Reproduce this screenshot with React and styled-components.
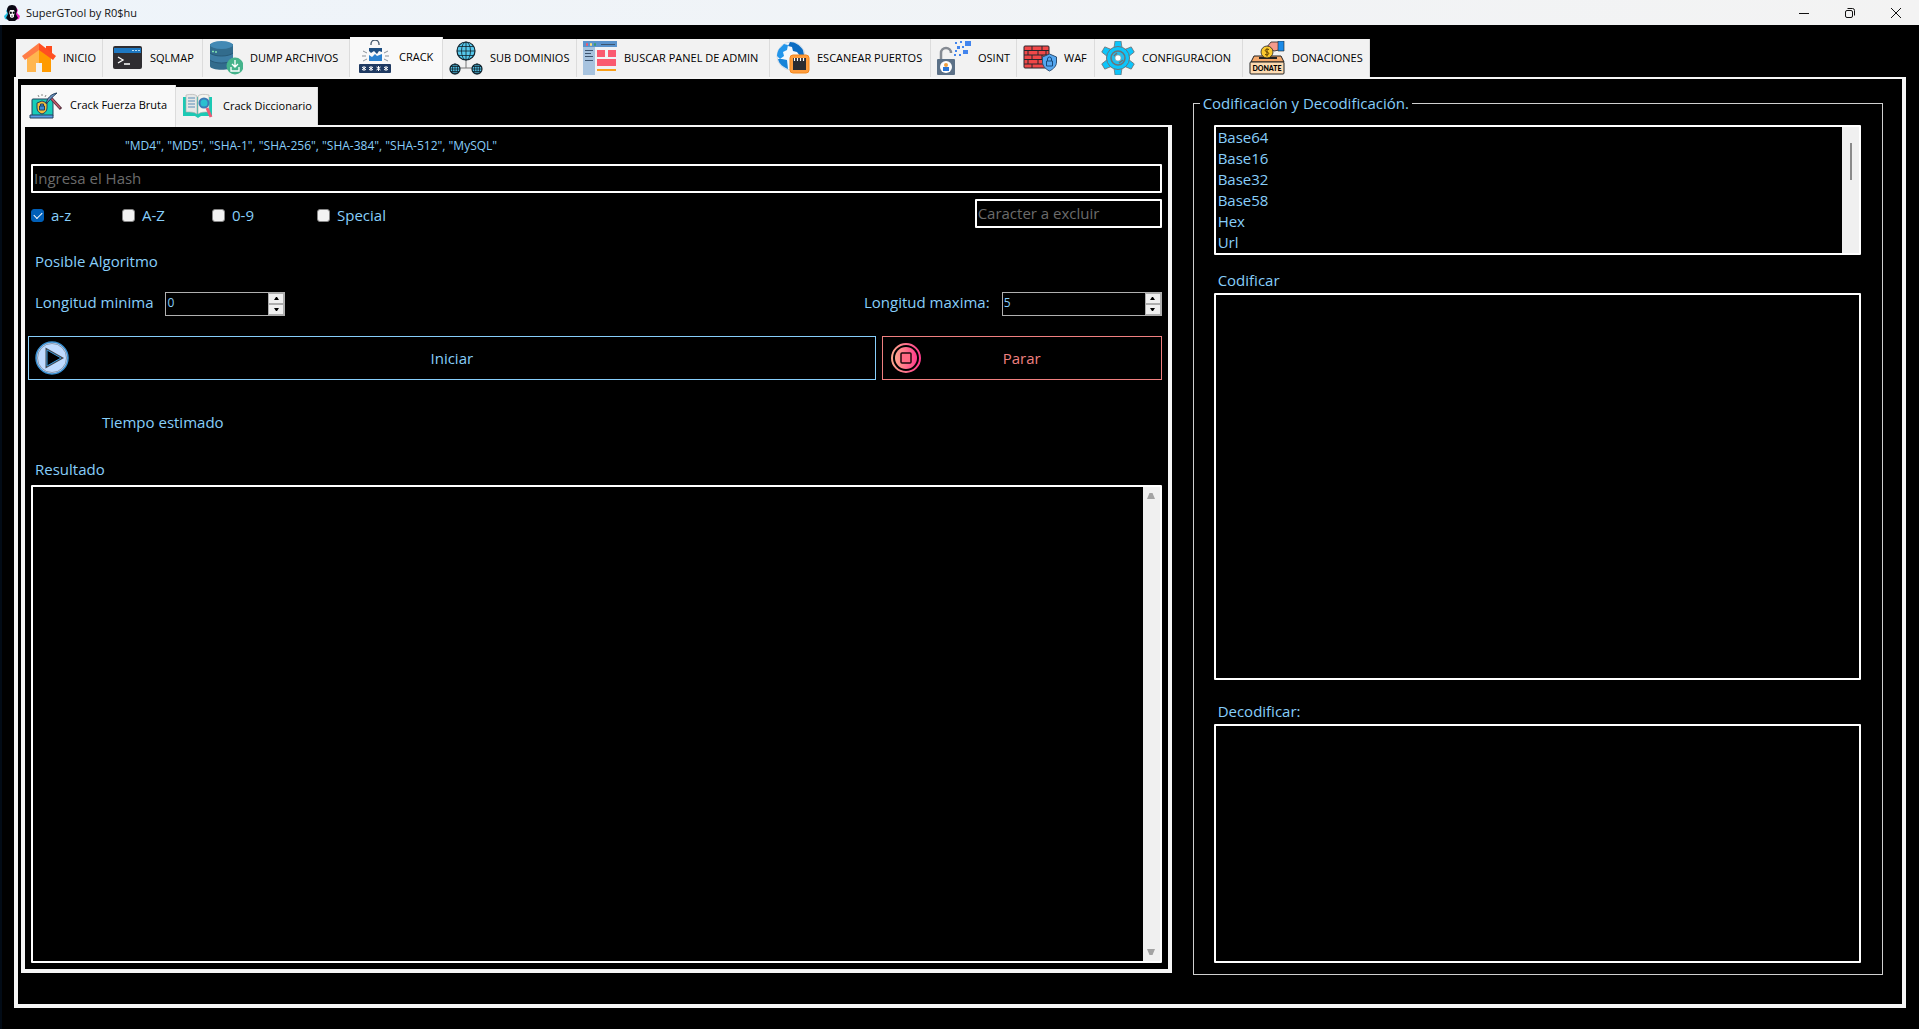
import React, { useState } from 'react'
import styled, { createGlobalStyle } from 'styled-components'

const TABS = [
  { name: 'INICIO', width: 87, icon: HomeIcon },
  { name: 'SQLMAP', width: 100, icon: TerminalIcon },
  { name: 'DUMP ARCHIVOS', width: 147, icon: DatabaseIcon },
  { name: 'CRACK', width: 93, icon: CrackIcon },
  { name: 'SUB DOMINIOS', width: 134, icon: DomainsIcon },
  { name: 'BUSCAR PANEL DE ADMIN', width: 193, icon: PanelIcon },
  { name: 'ESCANEAR PUERTOS', width: 161, icon: PortsIcon },
  { name: 'OSINT', width: 86, icon: OsintIcon },
  { name: 'WAF', width: 78, icon: WafIcon },
  { name: 'CONFIGURACION', width: 148, icon: GearIcon },
  { name: 'DONACIONES', width: 127, icon: DonateIcon },
]

const CRACK_TABS = [
  { name: 'Crack Fuerza Bruta', width: 155, icon: BruteIcon },
  { name: 'Crack Diccionario', width: 142, icon: BookIcon },
]

const CODECS = ['Base64', 'Base16', 'Base32', 'Base58', 'Hex', 'Url']

export default function App() {
  const [tab, setTab] = useState('CRACK')
  const [crackTab, setCrackTab] = useState('Crack Fuerza Bruta')

  return (
    <Window>
      <GlobalStyle />
      <TitleBar />
      <Main>
        <TabStrip inset={2} tabs={TABS} selected={tab} onSelect={setTab} />
        <Pane>
          <Columns>
            <CrackColumn>
              <TabStrip
                tabs={CRACK_TABS}
                selected={crackTab}
                onSelect={setCrackTab}
              />
              <Pane>
                <CrackForm />
              </Pane>
            </CrackColumn>
            <Codec />
          </Columns>
        </Pane>
      </Main>
    </Window>
  )
}

function TitleBar() {
  return (
    <TitleBarStyled>
      <SkullIcon />
      <Title>SuperGTool by R0$hu</Title>
      <WindowButton aria-label="Minimizar">
        <svg width="12" height="12" viewBox="0 0 12 12">
          <path d="M1 6.5h10" stroke="#111" />
        </svg>
      </WindowButton>
      <WindowButton aria-label="Restaurar">
        <svg width="12" height="12" viewBox="0 0 12 12" fill="none">
          <rect x="1.5" y="3.5" width="7" height="7" rx="1.5" stroke="#111" />
          <path d="M3.5 1.5h5a2 2 0 0 1 2 2v5" stroke="#111" />
        </svg>
      </WindowButton>
      <WindowButton aria-label="Cerrar">
        <svg width="12" height="12" viewBox="0 0 12 12">
          <path d="M1 1l10 10M11 1L1 11" stroke="#111" />
        </svg>
      </WindowButton>
    </TitleBarStyled>
  )
}

function TabStrip({ tabs, selected, onSelect, inset }) {
  return (
    <TabList role="tablist" $inset={inset}>
      {tabs.map(({ name, width, icon: Icon }) => (
        <Tab
          key={name}
          role="tab"
          aria-selected={name === selected}
          $active={name === selected}
          $width={width}
          onClick={() => onSelect(name)}
        >
          <Icon />
          {name}
        </Tab>
      ))}
    </TabList>
  )
}

function CrackForm() {
  return (
    <Form onSubmit={event => event.preventDefault()}>
      <Hashes>
        "MD4", "MD5", "SHA-1", "SHA-256", "SHA-384", "SHA-512", "MySQL"
      </Hashes>
      <TextInput aria-label="Hash" placeholder="Ingresa el Hash" />
      <CharsetRow>
        <Charsets>
          <Check label="a-z" defaultChecked />
          <Check label="A-Z" />
          <Check label="0-9" />
          <Check label="Special" />
        </Charsets>
        <ExcludeInput
          aria-label="Caracter a excluir"
          placeholder="Caracter a excluir"
        />
      </CharsetRow>
      <Algorithm>Posible Algoritmo</Algorithm>
      <LengthRow>
        <Spin id="min" label="Longitud minima" value={0} width={120} />
        <Spin id="max" label="Longitud maxima:" value={5} width={160} />
      </LengthRow>
      <Actions>
        <StartButton type="submit">
          <PlayIcon />
          <span>Iniciar</span>
        </StartButton>
        <StopButton type="button">
          <StopIcon />
          <span>Parar</span>
        </StopButton>
      </Actions>
      <Estimate>Tiempo estimado</Estimate>
      <ResultLabel htmlFor="result">Resultado</ResultLabel>
      <Frame $grow={1}>
        <TextArea id="result" readOnly />
        <ScrollBar>
          <Arrow viewBox="0 0 8 6">
            <path d="M2.5 0h3L8 6H0z" />
          </Arrow>
          <Arrow viewBox="0 0 8 6">
            <path d="M0 0h8L5.5 6h-3z" />
          </Arrow>
        </ScrollBar>
      </Frame>
    </Form>
  )
}

function Check({ label, ...props }) {
  return (
    <CheckLabel>
      <CheckBox type="checkbox" {...props} />
      {label}
    </CheckLabel>
  )
}

function Spin({ id, label, value, width }) {
  const [number, setNumber] = useState(value)
  return (
    <SpinGroup>
      <label htmlFor={id}>{label}</label>
      <SpinFrame $width={width}>
        <SpinInput
          id={id}
          type="number"
          value={number}
          onChange={event => setNumber(Number(event.target.value))}
        />
        <SpinButtons>
          <SpinButton
            type="button"
            aria-label="Subir"
            onClick={() => setNumber(number + 1)}
          >
            <svg width="5" height="3" viewBox="0 0 5 3">
              <path d="M2 0h1l2 3H0z" />
            </svg>
          </SpinButton>
          <SpinButton
            type="button"
            aria-label="Bajar"
            onClick={() => setNumber(Math.max(0, number - 1))}
          >
            <svg width="5" height="3" viewBox="0 0 5 3">
              <path d="M0 0h5L3 3H2z" />
            </svg>
          </SpinButton>
        </SpinButtons>
      </SpinFrame>
    </SpinGroup>
  )
}

function Codec() {
  return (
    <Group>
      <legend>Codificación y Decodificación.</legend>
      <Frame>
        <CodecList size={6} aria-label="Codificación">
          {CODECS.map(codec => (
            <option key={codec}>{codec}</option>
          ))}
        </CodecList>
        <ScrollBar $thumb>
          <Thumb />
        </ScrollBar>
      </Frame>
      <AreaLabel htmlFor="encode">Codificar</AreaLabel>
      <Frame $grow={13}>
        <TextArea id="encode" />
      </Frame>
      <AreaLabel htmlFor="decode">Decodificar:</AreaLabel>
      <Frame $grow={8}>
        <TextArea id="decode" />
      </Frame>
    </Group>
  )
}

const GlobalStyle = createGlobalStyle`
  * {
    box-sizing: border-box;
  }
  body {
    margin: 0;
    background: #000;
    color: #87cefa;
    font: 15px/20px 'Segoe UI', 'Open Sans', 'Noto Sans', sans-serif;
  }
  button, input, select, textarea {
    margin: 0;
    font: inherit;
    color: inherit;
  }
`

const Window = styled.div`
  display: flex;
  flex-direction: column;
  min-height: 100vh;
`
const TitleBarStyled = styled.header`
  display: flex;
  align-items: center;
  height: 25px;
  padding-left: 4px;
  background: linear-gradient(90deg, #eef4fa, #f3f3f3);
  color: #111;
`
const Title = styled.h1`
  flex: 1;
  margin: 0;
  padding-left: 6px;
  font-size: 11px;
  font-weight: 400;
`
const WindowButton = styled.button`
  display: grid;
  place-items: center;
  width: 46px;
  height: 22px;
  padding: 0;
  border: 0;
  background: none;
`

const Main = styled.main`
  flex: 1;
  display: flex;
  flex-direction: column;
  padding: 12px 13px 21px 12px;
  border-left: 2px solid #020b16;
`
const TabList = styled.div`
  display: flex;
  align-items: flex-end;
  padding-left: ${({ $inset }) => $inset || 0}px;
`
const Tab = styled.button`
  position: relative;
  display: flex;
  align-items: center;
  gap: 7px;
  width: ${({ $width }) => $width}px;
  height: ${({ $active }) => ($active ? 42 : 38)}px;
  margin-bottom: ${({ $active }) => ($active ? -2 : 0)}px;
  padding: ${({ $active }) => ($active ? '0 0 3px 8px' : '0 0 0 6px')};
  border: solid #dcdcdc;
  border-width: 0 1px 0 0;
  background: ${({ $active }) => ($active ? '#f9f9f9' : '#f2f2f2')};
  color: #000;
  font-size: 11px;
  white-space: nowrap;
  svg {
    flex: none;
  }
`
const Pane = styled.section`
  flex: 1;
  display: flex;
  flex-direction: column;
  border: solid #f6f6f6;
  border-width: 2px 4px 4px;
`
const Columns = styled.div`
  flex: 1;
  display: grid;
  grid-template-columns: minmax(0, 5fr) minmax(0, 3fr);
  gap: 21px;
  padding: 6px 19px 31px 3px;
`
const CrackColumn = styled.div`
  display: flex;
  flex-direction: column;
`

const Form = styled.form`
  flex: 1;
  display: flex;
  flex-direction: column;
  padding: 9px 6px 6px;
`
const Hashes = styled.p`
  margin: 0 0 8px;
  padding-left: 94px;
  font-size: 12px;
`
const TextInput = styled.input`
  height: 29px;
  padding: 0 1px 2px;
  border: 2px solid #fff;
  border-radius: 1px;
  background: #000;
  outline: none;
  &::placeholder {
    color: #6b6b6b;
    opacity: 1;
  }
`
const ExcludeInput = styled(TextInput)`
  width: 187px;
`
const CharsetRow = styled.div`
  display: flex;
  justify-content: space-between;
  align-items: flex-end;
  margin-top: 6px;
`
const Charsets = styled.div`
  display: grid;
  grid-template-columns: 91px 90px 105px auto;
  height: 26px;
`
const CheckLabel = styled.label`
  display: flex;
  align-items: center;
  gap: 7px;
`
const CheckBox = styled.input`
  appearance: none;
  display: grid;
  place-items: center;
  width: 13px;
  height: 13px;
  border: 1px solid #868686;
  border-radius: 3px;
  background: #f3f3f3;
  &:checked {
    border-color: #005fb8;
    background: #005fb8;
  }
  &:checked::after {
    content: '';
    width: 7px;
    height: 4px;
    margin-bottom: 2px;
    border: solid #fff;
    border-width: 0 0 1px 1px;
    transform: rotate(-45deg);
  }
`
const Algorithm = styled.p`
  margin: 23px 0 0;
  padding-left: 4px;
`
const LengthRow = styled.div`
  display: flex;
  justify-content: space-between;
  margin-top: 21px;
  padding-left: 4px;
`
const SpinGroup = styled.div`
  display: flex;
  align-items: flex-start;
  gap: 12px;
`
const SpinFrame = styled.div`
  display: flex;
  width: ${({ $width }) => $width}px;
  height: 24px;
  border: 1px solid #b0b0b0;
`
const SpinInput = styled.input`
  appearance: textfield;
  flex: 1;
  min-width: 0;
  padding: 0 0 3px 1px;
  border: 0;
  background: none;
  font-size: 12px;
  outline: none;
  &::-webkit-inner-spin-button {
    appearance: none;
  }
`
const SpinButtons = styled.div`
  display: flex;
  flex-direction: column;
  width: 16px;
  background: #f0f0f0;
`
const SpinButton = styled.button`
  flex: 1;
  display: grid;
  place-items: center;
  min-height: 0;
  padding: 0;
  border: 1px solid #adadad;
  background: #f0f0f0;
  line-height: 0;
`
const Actions = styled.div`
  display: grid;
  grid-template-columns: 1fr 280px;
  gap: 6px;
  margin: 20px 0 32px -3px;
`
const ActionButton = styled.button`
  display: flex;
  align-items: center;
  height: 44px;
  padding: 0 6px;
  border: 1px solid currentColor;
  background: #000;
  span {
    flex: 1;
    padding-right: 34px;
    text-align: center;
  }
`
const StartButton = styled(ActionButton)`
  color: #87cefa;
`
const StopButton = styled(ActionButton)`
  color: #f08080;
`
const Estimate = styled.p`
  margin: 0;
  padding-left: 71px;
`
const ResultLabel = styled.label`
  margin: 27px 0 6px;
  padding-left: 4px;
`

const Frame = styled.div`
  flex: ${({ $grow }) => ($grow ? `${$grow} 1 0` : 'none')};
  display: flex;
  min-height: ${({ $grow }) => ($grow ? 80 : 130)}px;
  border: 2px solid #fff;
  border-radius: 1px;
`
const TextArea = styled.textarea`
  flex: 1;
  min-width: 0;
  padding: 2px;
  border: 0;
  background: none;
  outline: none;
  resize: none;
`
const ScrollBar = styled.div`
  display: flex;
  flex-direction: column;
  align-items: center;
  justify-content: space-between;
  width: 17px;
  padding: ${({ $thumb }) => ($thumb ? '16px 0' : '6px 0')};
  background: #f0f0f0;
`
const Arrow = styled.svg`
  width: 8px;
  height: 6px;
  fill: #a3a3a3;
`
const Thumb = styled.div`
  width: 2px;
  height: 37px;
  background: #8a8a8a;
`

const Group = styled.fieldset`
  display: flex;
  flex-direction: column;
  min-width: 0;
  margin: 7px 0 -2px;
  padding: 11px 21px 11px 20px;
  border: 1px solid #d0d0d0;
  legend {
    margin-left: -14px;
    padding: 0 3px;
    line-height: 22px;
  }
`
const CodecList = styled.select`
  flex: 1;
  height: 126px;
  padding: 0;
  border: 0;
  background: none;
  outline: none;
  overflow: hidden;
  option {
    min-height: 21px;
    padding: 0 2px;
    line-height: 22px;
    height: 21px;
  }
`
const AreaLabel = styled.label`
  margin: 15px 0 3px;
  padding: 0 4px;
  &:last-of-type {
    margin-top: 21px;
  }
`

function SkullIcon() {
  return (
    <svg width="16" height="16" viewBox="0 0 16 16">
      <path d="M4 3L2 6l1 2-3 3 1 3 4 1z" fill="#27c4e8" />
      <path d="M11 1l3 4-1 3 3 3-1 3-4 1z" fill="#f21fc4" />
      <path d="M8 0c4 0 5 3 5 6l-1 3 2 4-3 3H5l-3-3 2-4-1-3c0-3 1-6 5-6z" fill="#090712" />
      <path d="M6 5h4l1 3-1 2v2l-2 1-2-1v-2L5 8z" fill="#f5f5f5" />
      <path d="M6 7h1.500v1.500H6zM9 7h1.500v1.500H9zM7 11h2" stroke="#090712" strokeWidth=".6" />
    </svg>
  )
}

function HomeIcon() {
  return (
    <svg width="34" height="34" viewBox="0 0 34 34">
      <path d="M24 5h6v11l-6-5z" fill="#ff4a1c" />
      <path d="M5 15L17 4v27H5z" fill="#ffb64f" />
      <path d="M17 4l12 11v16H17z" fill="#ff9a00" />
      <path d="M14 22h6v9h-6z" fill="#f2f2f2" />
      <path d="M17 2v7L3 19l-3-4z" fill="#ff7c45" />
      <path d="M17 2v7l14 10 3-4z" fill="#ff4f21" />
    </svg>
  )
}

function TerminalIcon() {
  return (
    <svg width="34" height="34" viewBox="0 0 34 34">
      <rect x="4" y="5" width="29" height="23" rx="2" fill="#2f2d31" />
      <path d="M5 7h27v5H5z" fill="#1e78c2" />
      <path d="M23 9.500h2m1 0h2m1 0h2" stroke="#b5dcf5" />
      <path d="M9 16l5 3-5 3m6 1h6" stroke="#fff" strokeWidth="1.300" fill="none" />
    </svg>
  )
}

function DatabaseIcon() {
  return (
    <svg width="34" height="34" viewBox="0 0 34 34">
      <path d="M1 3v22c0 5 23 5 23 0V3z" fill="#326c8d" />
      <ellipse cx="12.500" cy="4" rx="11.500" ry="4" fill="#4389b4" />
      <path d="M1 12c4 4 19 4 23 0v7c-4 4-19 4-23 0z" fill="#3d7da4" />
      <path d="M1 12c4 4 19 4 23 0M1 19c4 4 19 4 23 0" stroke="#285a78" fill="none" />
      <path d="M3 10.500h2m1 .5h2" stroke="#7fe0b0" strokeWidth="1.500" />
      <circle cx="26" cy="25" r="8.500" fill="#45b38b" />
      <path d="M26 19v7m-3-3l3 3 3-3m-7 3v4h8v-4" stroke="#fff" strokeWidth="1.300" fill="none" />
    </svg>
  )
}

function CrackIcon() {
  return (
    <svg width="34" height="34" viewBox="0 0 34 34">
      <path d="M13 5V4a4 4 0 0 1 8 0v1" stroke="#46596d" strokeWidth="1.300" fill="none" />
      <path d="M11 8h13v4l-3-1-2 3-3-3-3 2-2-2z" fill="#1e4f82" />
      <path d="M11 15l3 2 3-3 2 2 5-2v7H11z" fill="#2b82d0" />
      <path d="M5 11l4 2m-5 3h4m-3 5l4-2M30 11l-4 2m5 3h-4m3 5l-4-2" stroke="#8b9299" />
      <rect x="1" y="24" width="32" height="9" rx="1" fill="#1f3a62" />
      <path
        d="M6 26v5m-2-4l4 3m0-3l-4 3M13 26v5m-2-4l4 3m0-3l-4 3M20.500 26v5m-2-4l4 3m0-3l-4 3M28 26v5m-2-4l4 3m0-3l-4 3"
        stroke="#fff"
      />
    </svg>
  )
}

function Globe({ x, y, r }) {
  return (
    <g fill="none" stroke="#10222c">
      <circle cx={x} cy={y} r={r} fill="#55c8ec" strokeWidth="1.200" />
      <ellipse cx={x} cy={y} rx={r / 2} ry={r} strokeWidth=".8" />
      <path
        strokeWidth=".8"
        d={`M${x} ${y - r}v${r * 2}M${x - r} ${y}h${r * 2}M${x - r * 0.85} ${y - r / 2}h${r * 1.7}M${x - r * 0.85} ${y + r / 2}h${r * 1.7}`}
      />
    </g>
  )
}

function DomainsIcon() {
  return (
    <svg width="34" height="34" viewBox="0 0 34 34">
      <path d="M17 19v8M11 27h12" stroke="#777" />
      <Globe x={17} y={10} r={9} />
      <Globe x={6} y={28} r={5} />
      <Globe x={28} y={28} r={5} />
    </svg>
  )
}

function PanelIcon() {
  return (
    <svg width="34" height="34" viewBox="0 0 34 34">
      <path d="M0 0h34v34H0z" fill="#f0f2f5" />
      <path d="M0 6h12v28H0z" fill="#a7c3df" />
      <path d="M0 0h34v6H0z" fill="#5a93cc" />
      <path d="M3 3.500h2" stroke="#f4576b" strokeWidth="2.500" />
      <path d="M7 3.500h2" stroke="#ffe07a" strokeWidth="2.500" />
      <path d="M11 3.500h2" stroke="#3a9c73" strokeWidth="2.500" />
      <path d="M18 3.500h14M2 9.500h8m-8 3h6m-6 3h8m-8 4h8" stroke="#3d5570" />
      <path d="M14 9h8v7h-8zM25 9h8v7h-8zM14 18h19v7H14z" fill="#fa5a70" />
      <path d="M14 28h19v2H14z" fill="#f9a01b" />
    </svg>
  )
}

function PortsIcon() {
  return (
    <svg width="34" height="34" viewBox="0 0 34 34">
      <circle cx="15" cy="15" r="14" fill="#f4f8fc" stroke="#b8c8d8" strokeWidth=".6" />
      <path d="M3 8l5-5 4 1-1 5-4 2 1 4-4 3-3-3c0-3 1-5 2-7z" fill="#2295ea" />
      <path d="M14 1c5 0 10 3 13 8l1 5-4 1-3-4-4-1-1-4-4-1z" fill="#0c6cc2" />
      <path d="M6 18l5 1 1 9c-5-2-9-5-10-10z" fill="#1683d8" />
      <rect x="14" y="14" width="19" height="18" rx="3" fill="#ff9d3c" stroke="#f3871d" />
      <path d="M17 17h13v12H17z" fill="#2c2c31" />
      <path d="M18.500 17v3m3-3v3m3-3v3m3-3v3" stroke="#fff" strokeWidth="1.200" />
    </svg>
  )
}

function OsintIcon() {
  return (
    <svg width="34" height="34" viewBox="0 0 34 34">
      <path d="M4 18v-6a5 5 0 0 1 10 0" stroke="#858b93" strokeWidth="2.500" fill="none" />
      <rect y="18" width="18" height="16" rx="1" fill="#5c7187" />
      <circle cx="9" cy="26" r="6" fill="#fff" />
      <circle cx="9" cy="24" r="2" fill="#f0a040" />
      <path d="M6 26h6v4H6z" fill="#2b77d8" />
      <path
        d="M28 0h6v5h-6zM26 9h5v4h-5zM20 5h3v3h-3zM23 0h2v2h-2zM18 1h2v2h-2zM18 9h2v2h-2zM22 13h2v2h-2zM25 5h2v2h-2zM17 13h2v2h-2z"
        fill="#4285ee"
      />
    </svg>
  )
}

function WafIcon() {
  return (
    <svg width="34" height="34" viewBox="0 0 34 34">
      <rect x="1" y="5" width="25" height="22" rx="1" fill="#f04848" stroke="#26262c" />
      <path
        d="M1 9.500h25M1 14h25M1 18.500h25M1 23h25M9 5v4.500M19 5v4.500M5 9.500V14m10-4.500V14m8-4.500V14M9 14v4.500m10-4.500v4.500M5 18.500V23m10-4.500V23M9 23v4"
        stroke="#26262c"
      />
      <path d="M26.500 13l7 3v5c0 4-3 7-7 9-4-2-7-5-7-9v-5z" fill="#55a7f0" stroke="#2c4f73" />
      <path d="M24.500 20v-2a2 2 0 0 1 4 0v2m-5 0h6v5h-6z" stroke="#174a7c" fill="none" />
    </svg>
  )
}

function GearIcon() {
  return (
    <svg width="34" height="34" viewBox="-17 -17 34 34">
      {[0, 60, 120, 180, 240, 300].map(angle => (
        <path
          key={angle}
          d="M-3-17h6l1 7h-8z"
          transform={`rotate(${angle})`}
          fill="#0cc5fb"
          stroke="#6d7478"
          strokeWidth=".8"
        />
      ))}
      <circle r="11.500" fill="#0cc5fb" stroke="#6d7478" />
      <circle r="7" fill="#22bfee" stroke="#6d7478" strokeWidth="1.500" />
      <path d="M-4-2l3-3m2 10l4-3" stroke="#6d7478" strokeWidth="1.500" />
      <circle r="3" fill="#fff" stroke="#999" strokeWidth=".6" />
    </svg>
  )
}

function DonateIcon() {
  return (
    <svg width="36" height="34" viewBox="0 0 36 34">
      <path d="M5 15h27l3 6H2z" fill="#f5a96b" stroke="#222" />
      <path d="M10 17h18" stroke="#222" strokeWidth="2" />
      <rect x="1" y="21" width="34" height="12" rx="1" fill="#fddbb2" stroke="#222" />
      <path d="M17 7l5-6h8v8l-5 1-3-2-4 2z" fill="#f49a8c" stroke="#222" strokeWidth=".8" />
      <path d="M29 0h6v10h-6z" fill="#1b8be8" stroke="#222" strokeWidth=".6" />
      <circle cx="18" cy="11" r="6" fill="#fbc92e" stroke="#222" strokeWidth=".8" />
      <path d="M20 8.500c-4-1.500-5 2-2 2.500s2 4-2 2.500m2-6v8" stroke="#5c3f00" fill="none" />
      <text
        x="18"
        y="30"
        textAnchor="middle"
        fontFamily="Lato, sans-serif"
        fontSize="7"
        fontWeight="900"
      >
        DONATE
      </text>
    </svg>
  )
}

function BruteIcon() {
  return (
    <svg width="34" height="34" viewBox="0 0 34 34">
      <rect x="3" y="11" width="21" height="17" rx="1" fill="#17cdb8" stroke="#24405c" />
      <path d="M1 27h23v3H1z" fill="#5a9fe8" stroke="#24405c" />
      <path d="M8 15l5-2 5 2v5c0 3-2 5-5 6-3-1-5-3-5-6z" fill="#f6be3b" stroke="#24405c" />
      <path d="M10.500 18h5v4h-5zM11.500 18v-2h3v2" fill="#3c8bd8" stroke="#24405c" />
      <path d="M21 9l11 12" stroke="#57303e" strokeWidth="3" />
      <path d="M22 10l9 10" stroke="#c75b6b" strokeWidth="1.300" />
      <path d="M17 16c1-6 5-10 11-11-4 3-7 7-11 11z" fill="#6a90c0" stroke="#24405c" />
      <path d="M9 7l1 2m3-3v2m4-1l-1 2" stroke="#888" />
    </svg>
  )
}

function BookIcon() {
  return (
    <svg width="34" height="34" viewBox="0 0 34 34">
      <path d="M1 8h29v19H19l-3 2-3-2H1z" fill="#1cc9b4" />
      <path d="M4 6c5-1 9-1 11 1v18c-3-2-6-2-11-2z" fill="#e6e8e6" stroke="#aaa" strokeWidth=".6" />
      <path d="M27 6c-5-1-9-1-11 1v18c3-2 6-2 11-2z" fill="#f4f4ee" stroke="#aaa" strokeWidth=".6" />
      <path d="M6 9h7m-7 3h7m-7 3h7m-7 3h7" stroke="#5b8db8" />
      <circle cx="22" cy="14" r="4.500" fill="#2cc0cf" stroke="#3d7bb8" strokeWidth="2" />
      <path d="M25 19l4 9" stroke="#ee5a75" strokeWidth="3" />
    </svg>
  )
}

function PlayIcon() {
  return (
    <svg width="34" height="34" viewBox="0 0 34 34">
      <circle cx="17" cy="17" r="16" fill="#bfdbff" stroke="#3a8fd0" strokeWidth="1.500" />
      <circle cx="17" cy="17" r="14.500" fill="none" stroke="#666b73" strokeWidth=".6" />
      <path d="M12 9l14 8-14 8z" fill="#000" stroke="#45494f" strokeWidth="3" />
      <path d="M12 9l14 8-14 8z" fill="#000" stroke="#3a9be0" />
    </svg>
  )
}

function StopIcon() {
  return (
    <svg width="34" height="34" viewBox="0 0 34 34">
      <defs>
        <linearGradient id="stop">
          <stop offset="0" stopColor="#ffa58c" />
          <stop offset="1" stopColor="#ff3c8c" />
        </linearGradient>
      </defs>
      <circle cx="17" cy="17" r="14" fill="none" stroke="url(#stop)" strokeWidth="2" />
      <circle cx="17" cy="17" r="11" fill="url(#stop)" />
      <rect x="12" y="12" width="10" height="10" rx="1" fill="#ff6a84" stroke="#1c080c" strokeWidth="1.500" />
    </svg>
  )
}
